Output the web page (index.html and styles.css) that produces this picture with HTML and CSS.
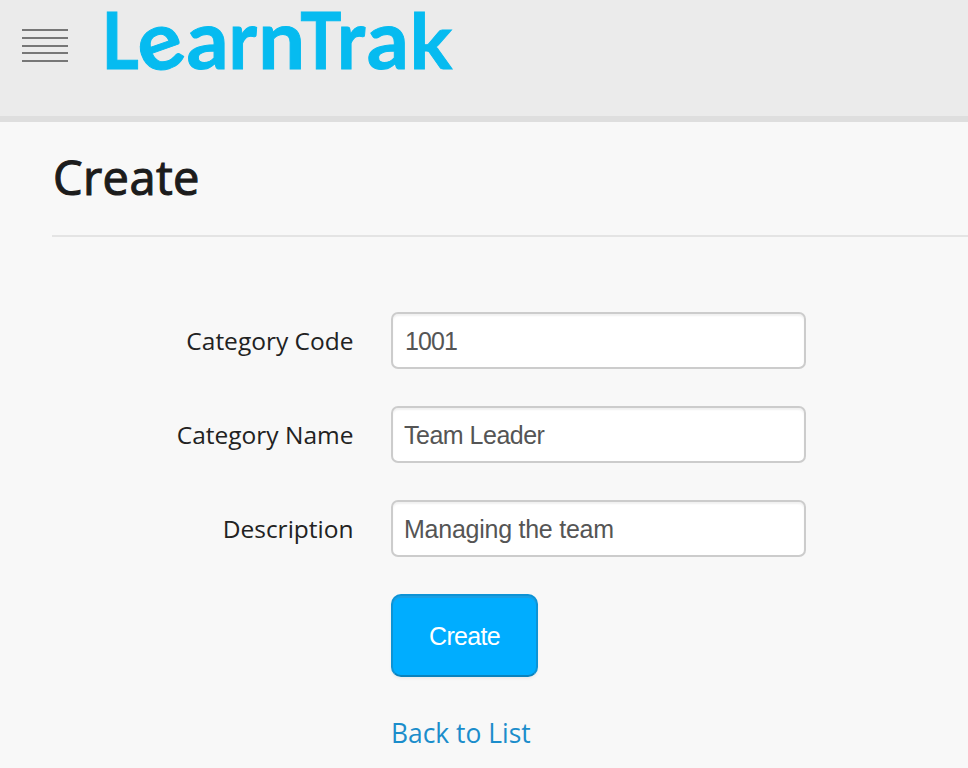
FILE: index.html
```html
<!DOCTYPE html>
<html lang="en">
<head>
<meta charset="utf-8">
<title>LearnTrak</title>
<link rel="stylesheet" href="styles.css">
</head>
<body>
<header class="topbar">
  <button class="menu" type="button" aria-label="Menu"><span></span><span></span><span></span><span></span><span></span></button>
  <svg class="logo" width="360" height="110" viewBox="100 0 360 110" role="img" aria-label="LearnTrak">
    <text transform="translate(101.5 69.3) scale(.92 1)">L</text>
    <text class="small" transform="translate(146 76) rotate(-19) scale(1.02 .98)">e</text>
    <text class="small" transform="translate(186.5 69.3)">a</text>
    <text class="small" transform="translate(228.5 69.3) scale(.92 1)">r</text>
    <text class="small" transform="translate(258.3 69.3)">n</text>
    <text transform="translate(300.3 69.3) scale(.88 1)">T</text>
    <text class="small" transform="translate(337 69.3) scale(.92 1)">r</text>
    <text class="small" transform="translate(366.7 69.3)">a</text>
    <text class="tall" transform="translate(409.8 69.3) scale(1.03 1)">k</text>
  </svg>
</header>
<main class="page">
  <h1>Create</h1>
  <form class="form">
    <label for="code">Category Code</label>
    <input id="code" class="code" type="text" value="1001">
    <label for="name">Category Name</label>
    <input id="name" class="name" type="text" value="Team Leader">
    <label for="desc">Description</label>
    <input id="desc" type="text" value="Managing the team">
    <button class="submit" type="button">Create</button>
    <a class="back" href="#">Back to List</a>
  </form>
</main>
</body>
</html>
```
FILE: styles.css
```css
* { box-sizing: border-box; }
body {
  margin: 0;
  height: 768px;
  overflow: hidden;
  background: #f8f8f8;
  color: #222;
  font-family: "Open Sans", sans-serif;
}
.topbar {
  display: flex;
  align-items: flex-start;
  height: 122px;
  padding-left: 22px;
  background: #ebebeb;
  border-bottom: 6px solid #dedede;
}
.menu {
  display: flex;
  flex-direction: column;
  justify-content: space-between;
  width: 46px;
  height: 33px;
  margin: 29px 32px 0 0;
  padding: 0;
  border: 0;
  background: none;
}
.menu span { height: 2px; background: #777; }
.logo { overflow: visible; }
.logo text {
  font-family: Lato, sans-serif;
  font-size: 78px;
  font-weight: 700;
  fill: #06bbf0;
  stroke: #06bbf0;
  stroke-width: 1px;
}
.logo .small { font-size: 83px; }
.logo .tall { font-size: 77px; }
.page { padding-left: 53px; }
h1 {
  height: 115px;
  margin: 0 0 0 -1px;
  padding: 23px 0 0 1px;
  border-bottom: 2px solid #e4e4e4;
  color: #1c1c1c;
  font-size: 47px;
  font-weight: 400;
  -webkit-text-stroke: 1.1px #1c1c1c;
  line-height: 64px;
  letter-spacing: .4px;
}
.form {
  display: grid;
  grid-template-columns: 300.5px 414px;
  column-gap: 37.5px;
  row-gap: 38px;
  padding-top: 75px;
}
label {
  height: 56px;
  text-align: right;
  font-size: 24.5px;
  line-height: 58px;
}
input {
  width: 415px;
  height: 57px;
  margin-bottom: -1px;
  padding: 1px 11px 0;
  border: 2px solid #ccc;
  border-radius: 7px;
  background: #fff;
  box-shadow: inset 0 2px 2px rgba(0, 0, 0, .06);
  color: #555;
  font: 25px "Liberation Sans", sans-serif;
  letter-spacing: -.25px;
}
.code { letter-spacing: -.9px; padding-left: 12px; }
.name { letter-spacing: -.5px; }
.submit {
  grid-column: 2;
  width: 147px;
  height: 83px;
  margin-bottom: -1px;
  padding: 2px 0 0;
  border: 2px solid #0c93d6;
  border-bottom-color: #0982bd;
  border-radius: 10px;
  background: #00adff;
  box-shadow: inset 0 2px 0 #1a9fe3, 0 2px 3px rgba(0, 0, 0, .05);
  color: #fff;
  font: 25px "Liberation Sans", sans-serif;
  letter-spacing: -.7px;
}
.back {
  grid-column: 2;
  color: #1b8dcb;
  font-size: 26.4px;
  line-height: 39px;
  text-decoration: none;
}
```
